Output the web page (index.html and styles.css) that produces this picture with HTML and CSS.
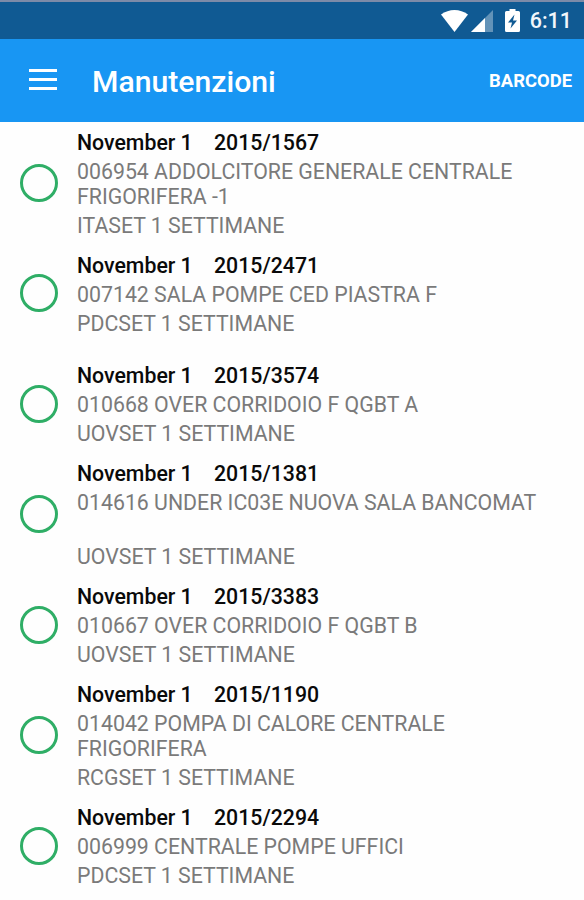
FILE: index.html
```html
<!DOCTYPE html>
<html lang="it">
<head>
  <meta charset="UTF-8">
  <meta name="viewport" content="width=device-width, initial-scale=1.0">
  <title>Manutenzioni</title>
  <link rel="stylesheet" href="styles.css">
</head>
<body>
  <!-- Status Bar -->
  <div class="status-bar">
    <svg class="wifi-icon" width="27" height="22" viewBox="0 0 27 22">
      <path d="M0 4.5C8 -1.5 19 -1.5 27 4.5L13.5 22Z" fill="#fff"/>
    </svg>
    <svg class="signal-icon" width="22" height="22" viewBox="0 0 22 22">
      <path d="M0 22L22 0V22Z" fill="#fff" fill-opacity="0.35"/>
      <path d="M0 22L14 8V22Z" fill="#fff"/>
    </svg>
    <svg class="battery-icon" width="15" height="23" viewBox="0 0 15 23">
      <path fill-rule="evenodd" d="M4.5 0H10.5V2H13.5Q15 2 15 3.5V21.5Q15 23 13.5 23H1.5Q0 23 0 21.5V3.5Q0 2 1.5 2H4.5ZM9.5 5.5L3 13.5H7L5.5 19.5L12 11.5H8Z" fill="#fff"/>
    </svg>
    <span class="clock">6:11</span>
  </div>

  <!-- App Bar -->
  <header class="app-bar">
    <button class="menu-icon" aria-label="Menu">
      <span></span>
      <span></span>
      <span></span>
    </button>
    <h1>Manutenzioni</h1>
    <button class="barcode-btn">BARCODE</button>
  </header>

  <!-- Maintenance List -->
  <ul class="list">
    <li class="item">
      <span class="circle"></span>
      <div class="info">
        <h2><span class="date">November 1</span><span>2015/1567</span></h2>
        <p>006954 ADDOLCITORE GENERALE CENTRALE FRIGORIFERA -1</p>
        <p>ITASET 1 SETTIMANE</p>
      </div>
    </li>
    <li class="item">
      <span class="circle"></span>
      <div class="info">
        <h2><span class="date">November 1</span><span>2015/2471</span></h2>
        <p>007142 SALA POMPE CED PIASTRA F</p>
        <p>PDCSET 1 SETTIMANE</p>
      </div>
    </li>
    <li class="item">
      <span class="circle"></span>
      <div class="info">
        <h2><span class="date">November 1</span><span>2015/3574</span></h2>
        <p>010668 OVER CORRIDOIO F QGBT A</p>
        <p>UOVSET 1 SETTIMANE</p>
      </div>
    </li>
    <li class="item">
      <span class="circle"></span>
      <div class="info">
        <h2><span class="date">November 1</span><span>2015/1381</span></h2>
        <p class="two-lines">014616 UNDER IC03E NUOVA SALA BANCOMAT</p>
        <p>UOVSET 1 SETTIMANE</p>
      </div>
    </li>
    <li class="item">
      <span class="circle"></span>
      <div class="info">
        <h2><span class="date">November 1</span><span>2015/3383</span></h2>
        <p>010667 OVER CORRIDOIO F QGBT B</p>
        <p>UOVSET 1 SETTIMANE</p>
      </div>
    </li>
    <li class="item">
      <span class="circle"></span>
      <div class="info">
        <h2><span class="date">November 1</span><span>2015/1190</span></h2>
        <p>014042 POMPA DI CALORE CENTRALE FRIGORIFERA</p>
        <p>RCGSET 1 SETTIMANE</p>
      </div>
    </li>
    <li class="item">
      <span class="circle"></span>
      <div class="info">
        <h2><span class="date">November 1</span><span>2015/2294</span></h2>
        <p>006999 CENTRALE POMPE UFFICI</p>
        <p>PDCSET 1 SETTIMANE</p>
      </div>
    </li>
  </ul>
</body>
</html>
```
FILE: styles.css
```css
/* General Styling */
* {
  box-sizing: border-box;
}

body {
  font-family: Roboto, sans-serif;
  margin: 0;
  height: 900px;
  overflow: hidden;
  background-color: #fefefe;
}

button {
  font-family: inherit;
  background: none;
  border: none;
  padding: 0;
  cursor: pointer;
}

/* Status Bar */
.status-bar {
  display: flex;
  align-items: center;
  justify-content: flex-end;
  height: 39px;
  padding: 0 12px 0 0;
  background: #105a93;
  border-top: 2px solid #7d8ba8;
  color: #f2f6fa;
}

.signal-icon {
  margin-left: 3px;
}

.battery-icon {
  margin-left: 12px;
}

.clock {
  margin-left: 10px;
  font-size: 21.5px;
  font-weight: 500;
}

/* App Bar */
.app-bar {
  display: flex;
  align-items: center;
  height: 83px;
  padding: 0 12px 0 29px;
  background: #1896f3;
  color: white;
}

.menu-icon {
  display: flex;
  flex-direction: column;
  gap: 6px;
  width: 28px;
  margin: 0 35px 2px 0;
}

.menu-icon span {
  width: 100%;
  height: 3px;
  background: white;
}

.app-bar h1 {
  flex-grow: 1;
  margin: 1px 0 0;
  font-size: 30.2px;
  font-weight: 500;
}

.barcode-btn {
  color: white;
  font-size: 18.4px;
  font-weight: 700;
}

/* Maintenance List */
.list {
  list-style: none;
  margin: 0;
  padding: 6.7px 0 0;
}

.item {
  display: flex;
  align-items: center;
  height: 110.5px;
  padding: 0 40px 0 19.5px;
}

.circle {
  flex-shrink: 0;
  width: 38px;
  height: 38px;
  margin: 0 19.5px 2px 0;
  border: 3px solid #2fae66;
  border-radius: 50%;
}

.info {
  flex-grow: 1;
}

.info h2,
.info p {
  margin: 0;
  font-size: 21.3px;
  line-height: 25px;
}

.info h2 {
  color: #0a0a0a;
  font-weight: 500;
}

.date {
  display: inline-block;
  width: 137px;
}

.info p {
  margin-top: 4px;
  color: #7a7a7a;
  font-weight: 400;
}

.info .two-lines {
  min-height: 50px;
}
```
